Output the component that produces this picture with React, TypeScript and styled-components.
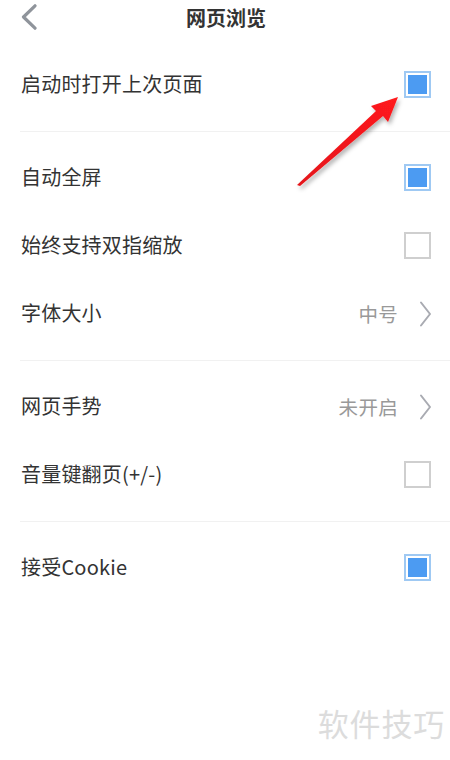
import React from "react";
import styled, { createGlobalStyle } from "styled-components";

const Global = createGlobalStyle`
  html, body { margin: 0; padding: 0; background: #fff; }
  body { font-family: "Noto Sans CJK SC", "Noto Sans", sans-serif; }
`;

const Page = styled.div`
  position: relative;
  width: 450px;
  height: 760px;
  overflow: hidden;
  background: #fff;
`;

const Header = styled.header`
  position: relative;
  height: 39px;
  display: flex;
  align-items: center;
  justify-content: center;
`;

const Back = styled.button`
  position: absolute;
  left: 18px;
  top: 3px;
  width: 22px;
  height: 28px;
  padding: 0;
  border: 0;
  background: none;
  display: flex;
  align-items: center;
  justify-content: center;
`;

const Title = styled.h1`
  margin: 0;
  font-size: 20px;
  font-weight: 700;
  color: #333;
  line-height: 1;
  transform: translate(1px, -2px);
`;

const Group = styled.section<{ $last?: boolean }>`
  padding: 12px 0;
  border-bottom: ${(p) => (p.$last ? "none" : "1px solid #f1f1f1")};
  margin-left: 20px;
`;

const Row = styled.div`
  height: 68px;
  display: flex;
  align-items: center;
  padding-right: 18px;
`;

const Label = styled.span`
  flex: 1;
  font-size: 20px;
  color: #333;
  padding-left: 1px;
  letter-spacing: 0.2px;
  margin-top: -3px;
`;

const Value = styled.span`
  font-size: 19.5px;
  color: #999;
  margin-right: 20px;
  margin-top: -2px;
  letter-spacing: 0.3px;
`;

const Box = styled.span<{ $on?: boolean }>`
  width: 19px;
  height: 19px;
  margin-right: 1px;
  border: 2px solid ${(p) => (p.$on ? "#9fc9f3" : "#cfcfcf")};
  padding: 2px;
  box-sizing: content-box;
  display: flex;
  margin-top: -2px;
  &::after {
    content: "";
    flex: 1;
    background: ${(p) => (p.$on ? "#4c9bf2" : "transparent")};
  }
`;

const Watermark = styled.div`
  position: absolute;
  right: 5px;
  top: 700px;
  font-size: 31px;
  color: #dcdcdc;
  letter-spacing: 0.8px;
`;

const ArrowLayer = styled.svg`
  position: absolute;
  left: 0;
  top: 0;
  pointer-events: none;
`;

const Chevron = () => (
  <svg width="16" height="26" viewBox="0 0 16 26">
    <path d="M14 1.8 L2.5 13 L14 24.2" fill="none" stroke="#8f949b" strokeWidth="3.2" strokeLinecap="round" strokeLinejoin="round" />
  </svg>
);

const Right = () => (
  <svg width="14" height="26" viewBox="0 0 14 26">
    <path d="M3 1.5 L12 13 L3 24.5" fill="none" stroke="#a9abb2" strokeWidth="2" strokeLinecap="round" strokeLinejoin="round" />
  </svg>
);

type Item = { label: string; on?: boolean; value?: string };

const groups: Item[][] = [
  [{ label: "启动时打开上次页面", on: true }],
  [
    { label: "自动全屏", on: true },
    { label: "始终支持双指缩放", on: false },
    { label: "字体大小", value: "中号" },
  ],
  [
    { label: "网页手势", value: "未开启" },
    { label: "音量键翻页(+/-)", on: false },
  ],
  [{ label: "接受Cookie", on: true }],
];

export default function App() {
  return (
    <Page>
      <Global />
      <Header>
        <Back aria-label="back">
          <Chevron />
        </Back>
        <Title>网页浏览</Title>
      </Header>
      {groups.map((g, gi) => (
        <Group key={gi} $last={gi === groups.length - 1}>
          {g.map((it) => (
            <Row key={it.label}>
              <Label>{it.label}</Label>
              {it.value !== undefined ? (
                <>
                  <Value>{it.value}</Value>
                  <Right />
                </>
              ) : (
                <Box $on={it.on} />
              )}
            </Row>
          ))}
        </Group>
      ))}
      <ArrowLayer width="450" height="760" viewBox="0 0 450 760">
        <defs>
          <filter id="sh" x="-20%" y="-20%" width="140%" height="140%">
            <feDropShadow dx="2" dy="3" stdDeviation="2" floodColor="#000" floodOpacity="0.3" />
          </filter>
          <linearGradient id="rg" x1="0" y1="1" x2="1" y2="0">
            <stop offset="0" stopColor="#e4141a" />
            <stop offset="1" stopColor="#ff1a1a" />
          </linearGradient>
        </defs>
        <polygon
          points="297,185 376,111 371,106 398,97 388,122 383,116 300,186"
          fill="url(#rg)"
          filter="url(#sh)"
        />
      </ArrowLayer>
      <Watermark>软件技巧</Watermark>
    </Page>
  );
}
